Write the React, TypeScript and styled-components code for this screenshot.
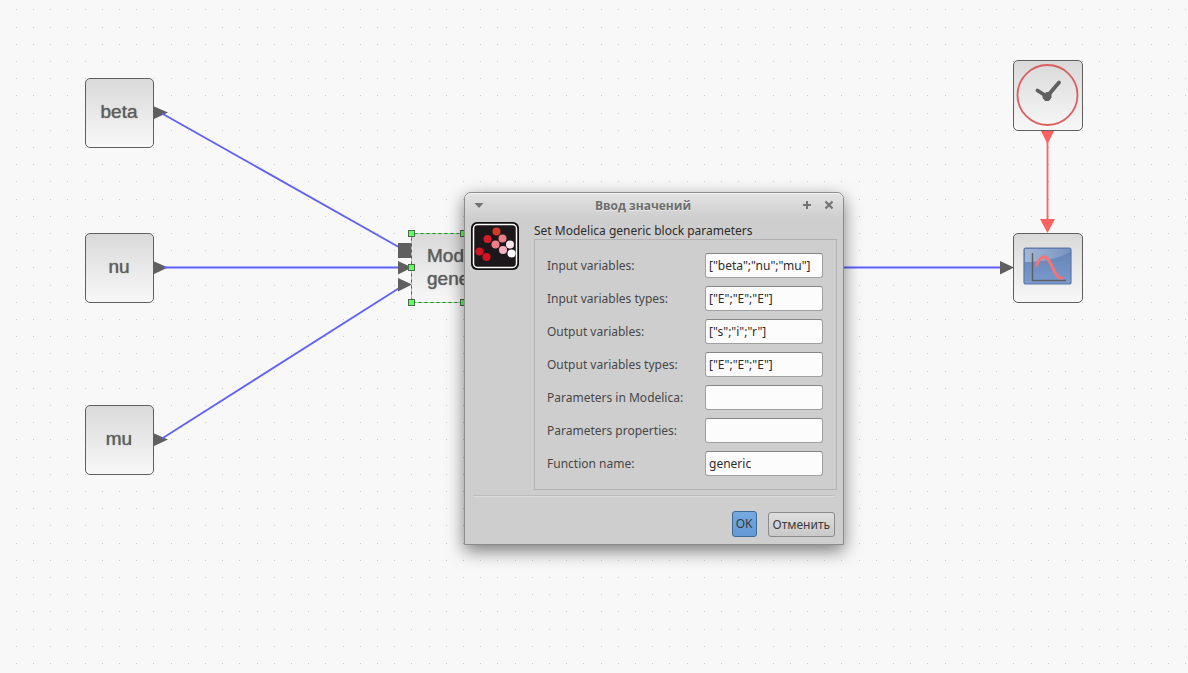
import React from "react";
import styled, { createGlobalStyle } from "styled-components";

const GlobalStyle = createGlobalStyle`
  *, *::before, *::after { box-sizing: border-box; }
  html, body { margin: 0; height: 100%; }
  #root { height: 100%; }
  body { background: #f8f8f8; }
`;

const ink = "#5f5f5f";
const uiFont = '"Noto Sans", "Open Sans", sans-serif';

const Canvas = styled.main`
  position: relative;
  width: 100%;
  min-height: 100%;
  overflow: hidden;
  background: #f8f8f8;
`;

const Layer = styled.svg`
  position: absolute;
  inset: 0;
  width: 100%;
  height: 100%;
`;

const Block = styled.div<{ $x: number; $y: number; $w?: number; $h?: number; $selected?: boolean }>`
  position: absolute;
  left: ${(p) => p.$x}px;
  top: ${(p) => p.$y}px;
  width: ${(p) => p.$w ?? 70}px;
  height: ${(p) => p.$h ?? 70}px;
  display: flex;
  align-items: center;
  justify-content: ${(p) => (p.$selected ? "flex-start" : "center")};
  padding: ${(p) => (p.$selected ? "0 0 2px 15px" : "0 1px 4px 0")};
  border: 1px solid ${(p) => (p.$selected ? "transparent" : ink)};
  border-radius: 5px;
  background: linear-gradient(#d9d9d9, #f8f8f8) border-box;
  color: ${ink};
  font: 19px/23px "Liberation Sans", Arial, sans-serif;
  text-shadow: 0 0 1px ${ink};
  white-space: pre-line;
`;

const Picture = styled.svg`
  position: absolute;
  inset: -1px;
  width: 70px;
  height: 71px;
`;

const Dialog = styled.section`
  position: absolute;
  left: 464px;
  top: 192px;
  width: 380px;
  border: 1px solid #8c8c8c;
  border-radius: 7px 7px 0 0;
  background: #cecece;
  box-shadow: 0 6px 17px rgba(0, 0, 0, 0.5);
  color: #2c2c2c;
  font: 12px/16px ${uiFont};
`;

const TitleBar = styled.header`
  display: grid;
  grid-template-columns: 60px 1fr 82px;
  align-items: center;
  height: 25px;
  padding: 0 8px;
  border-top: 1px solid #f4f4f4;
  border-radius: 6px 6px 0 0;
  background: linear-gradient(#e2e2e2, #cecece);
`;

const Title = styled.h1`
  margin: 0;
  color: #6e6e6e;
  text-align: center;
  text-shadow: 0 1px #ececec;
  white-space: nowrap;
  font: bold 12px/16px "Open Sans", "Noto Sans", sans-serif;
`;

const WindowButtons = styled.div`
  display: flex;
  justify-content: flex-end;
  gap: 10px;
`;

const IconButton = styled.button`
  display: block;
  width: 12px;
  height: 12px;
  padding: 0;
  border: 0;
  background: none;
  color: #737373;

  svg { display: block; }
`;

const Body = styled.div`
  display: grid;
  grid-template-columns: 63px 1fr;
  padding: 4px 6px 5px;
`;

const Logo = styled.svg`
  width: 48px;
  height: 48px;
`;

const Heading = styled.h2`
  margin: 0;
  padding-top: 1px;
  font: 12px/16px ${uiFont};
`;

const Fields = styled.div`
  display: flex;
  flex-direction: column;
  gap: 8px;
  padding: 13px 13px 13px 12px;
  border: 1px solid #b2b2b2;
`;

const Field = styled.div`
  display: flex;
  align-items: center;
  justify-content: space-between;
`;

const Label = styled.label`
  color: #484848;
`;

const TextBox = styled.input`
  width: 118px;
  height: 25px;
  padding: 0 3px;
  border: 1px solid #a0a0a0;
  border-top-color: #858585;
  border-radius: 3px;
  background: #fcfcfc;
  color: #2c2c2c;
  font: 12px/16px ${uiFont};
`;

const Footer = styled.footer`
  display: flex;
  align-items: flex-end;
  justify-content: flex-end;
  gap: 11px;
  margin: 0 8px;
  padding: 15px 0 7px;
  border-top: 1px solid #bdbdbd;
  box-shadow: inset 0 1px #dcdcdc;
`;

const Button = styled.button<{ $primary?: boolean }>`
  height: ${(p) => (p.$primary ? 26 : 25)}px;
  padding: 0 ${(p) => (p.$primary ? 3 : 4)}px;
  border: 1px solid ${(p) => (p.$primary ? "#3f6998" : "#8b8b8b")};
  border-radius: 3px;
  background: ${(p) => (p.$primary ? "linear-gradient(#75a9e0, #629ad6)" : "linear-gradient(#dedede, #c9c9c9)")};
  color: #3c3c3c;
  font: 12px/16px ${uiFont};
`;

const pitch = 17.2;
const dots = Array.from({ length: 75 }, (_, row) =>
  Array.from({ length: 150 }, (_, col) =>
    `M${Math.floor(16.3 + pitch * col)} ${Math.floor(9.9 + pitch * row)}h1v1h-1z`
  ).join("")
).join("");

const variables: { id: string; label: string; value: string }[] = [
  { id: "in", label: "Input variables:", value: '["beta";"nu";"mu"]' },
  { id: "in-types", label: "Input variables types:", value: '["E";"E";"E"]' },
  { id: "out", label: "Output variables:", value: '["s";"i";"r"]' },
  { id: "out-types", label: "Output variables types:", value: '["E";"E";"E"]' },
  { id: "params", label: "Parameters in Modelica:", value: "" },
  { id: "props", label: "Parameters properties:", value: "" },
  { id: "fn", label: "Function name:", value: "generic" },
];

const handles = [
  [411, 233], [463, 233], [515, 233], [411, 267], [515, 267], [411, 302], [463, 302], [515, 302],
];

const Links = () => (
  <Layer aria-hidden="true">
    <path d={dots} fill="#cbcbcb" shapeRendering="crispEdges" />
    <g fill={ink}>
      <path d="M153 106l15 6.500-15 7z" />
      <path d="M153 261l15 6.500-15 7z" />
      <path d="M153 433l15 6.500-15 7z" />
    </g>
    <g stroke="#6060ff" strokeWidth="1.800" fill="none">
      <path d="M162 113.500L404 250" />
      <path d="M164 267.500H404" />
      <path d="M162 438.500L404 285" />
      <path d="M800 267.500H1004" />
    </g>
    <g fill={ink}>
      <path d="M398 243h14v15h-14z" />
      <path d="M398 261l14 6.500-14 7z" />
      <path d="M398 278l14 6.500-14 7z" />
      <path d="M1000 261l14 6.500-14 7z" />
    </g>
    <path d="M1047.500 134V230" stroke="#ff6060" strokeWidth="1.800" />
    <g fill="#ff6060">
      <path d="M1040 129h15l-7.500 15z" />
      <path d="M1040 219h15l-7.500 14z" />
    </g>
  </Layer>
);

const Selection = () => (
  <Layer aria-hidden="true">
    <rect x="411.500" y="233.500" width="104" height="69" rx="5" fill="none" stroke={ink} />
    <rect x="411.500" y="233.500" width="104" height="69" fill="none" stroke="#60ff60" strokeDasharray="3 3" />
    {handles.map(([x, y]) => (
      <rect key={`${x}-${y}`} x={x - 2.5} y={y - 2.5} width="6" height="6" fill="#60ff60" stroke="#4c6a4c" />
    ))}
  </Layer>
);

const ClockPicture = () => (
  <Picture viewBox="0 0 70 71" role="img" aria-label="Clock">
    <circle cx="34.500" cy="35" r="30" fill="none" stroke="#dc5f5f" strokeWidth="1.800" />
    <path d="M24.500 30.500L34 36.500L46 22.500" fill="none" stroke={ink} strokeWidth="3.800" strokeLinecap="round" />
    <path d="M30 34.500l4-2 4 1v4l-2 3h-4l-2-3z" fill={ink} stroke={ink} strokeLinejoin="round" />
  </Picture>
);

const ScopePicture = () => (
  <Picture viewBox="0 0 70 71" role="img" aria-label="Scope">
    <defs>
      <linearGradient id="screen" x1="0" y1="0" x2="0" y2="1">
        <stop offset="0" stopColor="#6482b2" />
        <stop offset="1" stopColor="#7a9bd0" />
      </linearGradient>
      <linearGradient id="gloss" x1="0" y1="0" x2="1" y2="0">
        <stop offset="0" stopColor="#a3b6d4" />
        <stop offset="1" stopColor="#7794c2" />
      </linearGradient>
    </defs>
    <rect x="11" y="15" width="47" height="36" rx="2" fill="url(#screen)" stroke="#5b78a6" strokeWidth="1.200" />
    <path d="M12 16h45v3c-12 7-28 10-45 10z" fill="url(#gloss)" />
    <path d="M19.500 20v27.500H53" fill="none" stroke={ink} strokeWidth="1.400" />
    <path d="M23 33.500C26 26 29 23 32 24C38 26 41 42 46 44.500L50 45" fill="none" stroke="#f87474" strokeWidth="3" />
  </Picture>
);

const AppLogo = () => (
  <Logo viewBox="0 0 48 48" role="img" aria-label="Xcos">
    <rect width="48" height="48" rx="6" fill="#111" />
    <rect x="2.500" y="2.500" width="43" height="43" rx="4" fill="#1b171a" stroke="#fff" strokeWidth="1.500" />
    <circle cx="25.500" cy="9.500" r="4" fill="#d13c26" />
    <circle cx="16.500" cy="17" r="4" fill="#d41c2a" />
    <circle cx="31.500" cy="16.500" r="4" fill="#ee7d88" />
    <circle cx="24.500" cy="22.500" r="4" fill="#ee7d88" />
    <circle cx="39" cy="22.500" r="4" fill="#fbe6ee" />
    <circle cx="32" cy="28" r="4" fill="#f4b0c2" />
    <circle cx="8.500" cy="29.500" r="4" fill="#d1141f" />
    <circle cx="40.500" cy="31.500" r="4" fill="#fff" />
    <circle cx="15.500" cy="35" r="4" fill="#d1141f" />
  </Logo>
);

export default function App() {
  return (
    <Canvas>
      <GlobalStyle />
      <Links />
      <Block $x={85} $y={78} $w={69}>beta</Block>
      <Block $x={85} $y={233} $w={69}>nu</Block>
      <Block $x={85} $y={405} $w={69}>mu</Block>
      <Block $x={411} $y={233} $w={105} $selected>{"Modelica\ngeneric"}</Block>
      <Block $x={1013} $y={60} $h={71}><ClockPicture /></Block>
      <Block $x={1013} $y={233}><ScopePicture /></Block>
      <Selection />

      <Dialog role="dialog" aria-labelledby="dialog-title">
        <TitleBar>
          <IconButton type="button" aria-label="Меню окна">
            <svg width="12" height="12"><path d="M1.500 3h9L6 8z" fill="currentColor" /></svg>
          </IconButton>
          <Title id="dialog-title">Ввод значений</Title>
          <WindowButtons>
            <IconButton type="button" aria-label="Развернуть">
              <svg width="12" height="12"><path d="M6 1v8M2 5h8" stroke="currentColor" strokeWidth="2" /></svg>
            </IconButton>
            <IconButton type="button" aria-label="Закрыть">
              <svg width="12" height="12"><path d="M2.500 1.500l7 7M9.500 1.500l-7 7" stroke="currentColor" strokeWidth="2.200" /></svg>
            </IconButton>
          </WindowButtons>
        </TitleBar>
        <form onSubmit={(e: React.FormEvent) => e.preventDefault()}>
          <Body>
            <AppLogo />
            <div>
              <Heading>Set Modelica generic block parameters</Heading>
              <Fields>
                {variables.map((v) => (
                  <Field key={v.id}>
                    <Label htmlFor={v.id}>{v.label}</Label>
                    <TextBox id={v.id} type="text" defaultValue={v.value} />
                  </Field>
                ))}
              </Fields>
            </div>
          </Body>
          <Footer>
            <Button type="submit" $primary>OK</Button>
            <Button type="button">Отменить</Button>
          </Footer>
        </form>
      </Dialog>
    </Canvas>
  );
}
